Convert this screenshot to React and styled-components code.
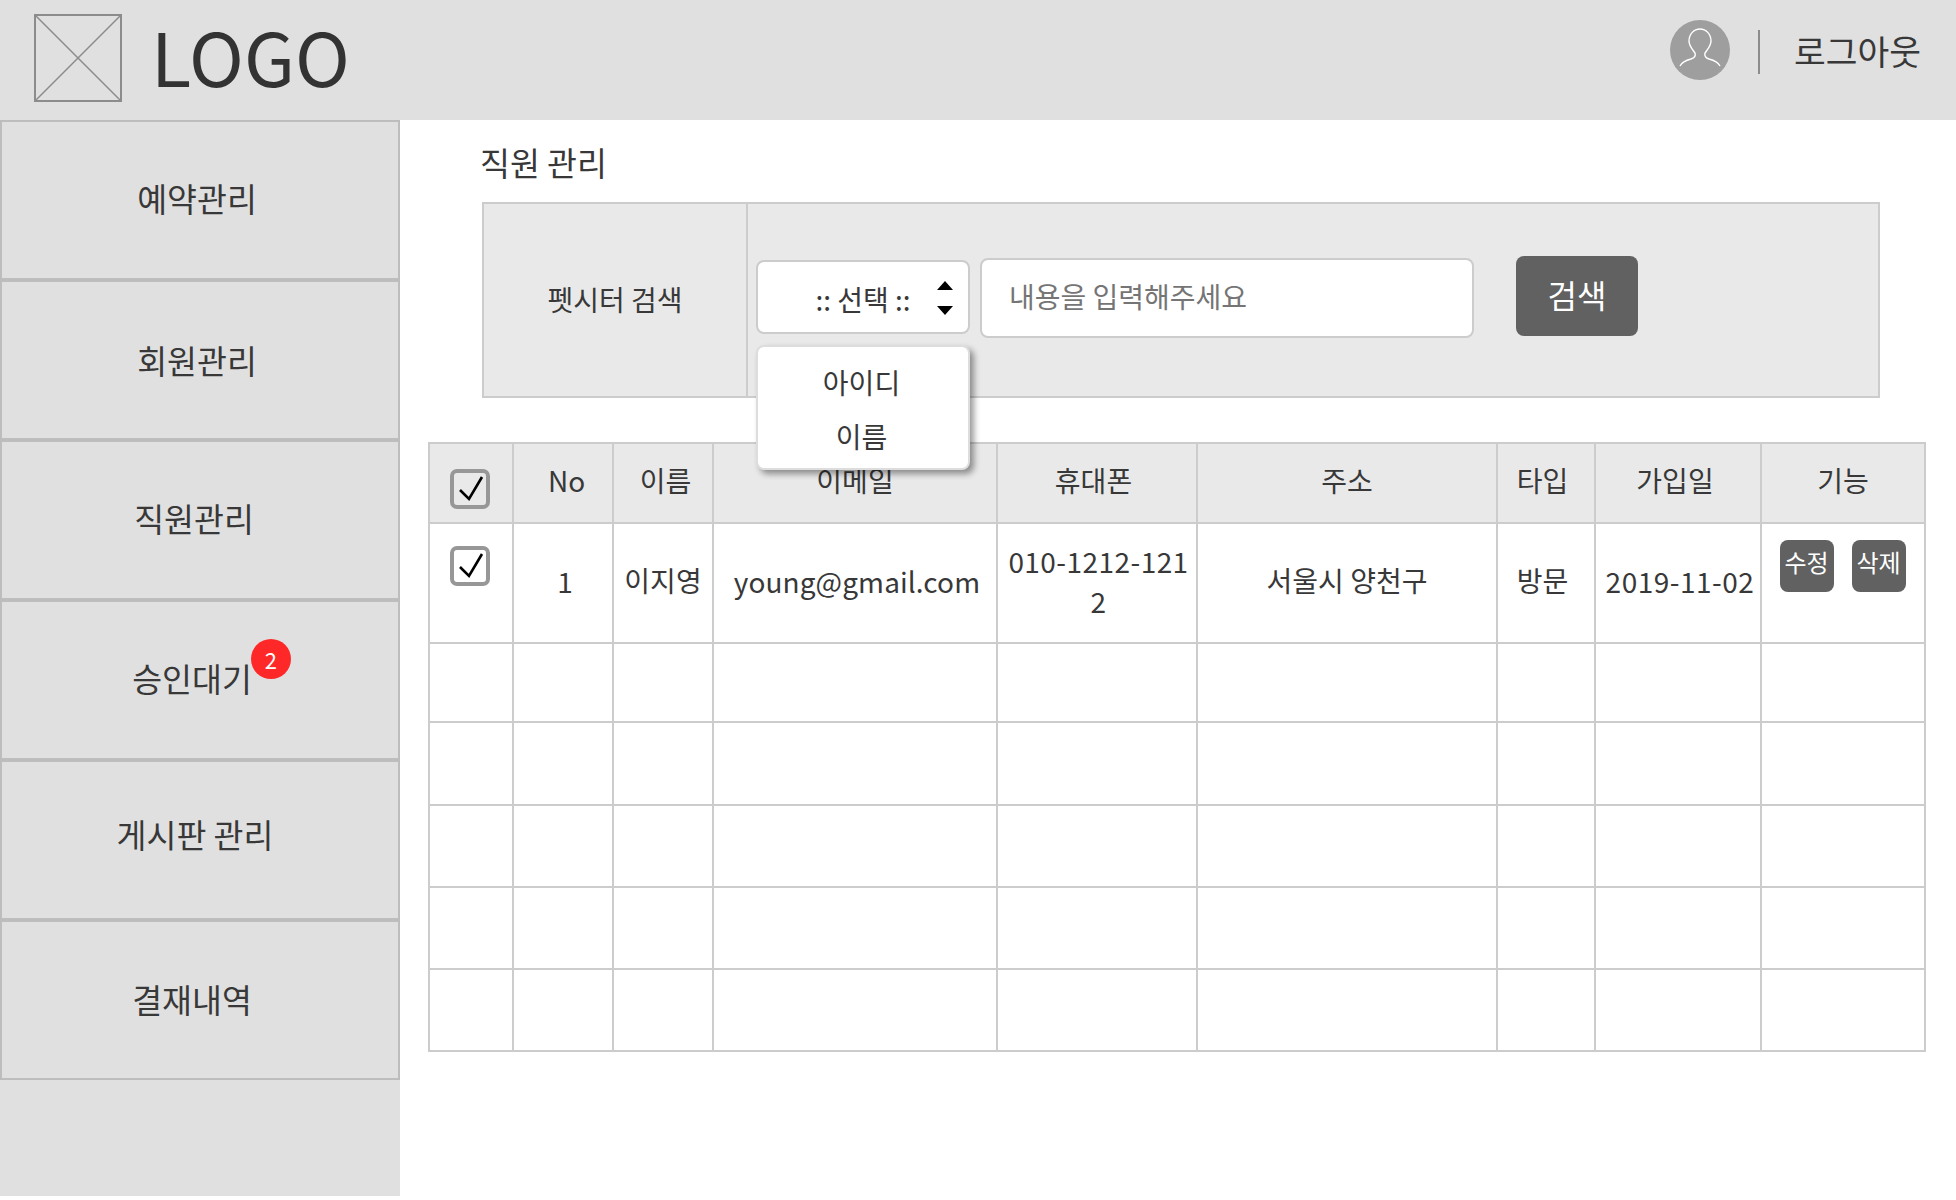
import React from "react";
import styled, { createGlobalStyle } from "styled-components";

const GlobalStyle = createGlobalStyle`
  body {
    margin: 0;
    background: #fff;
    color: #383838;
    font-family: "Noto Sans CJK KR", "Noto Sans", sans-serif;
  }
  * {
    box-sizing: border-box;
  }
`;

const Page = styled.div`
  width: 1956px;
`;

const Header = styled.header`
  height: 120px;
  background: #e0e0e0;
  display: flex;
  align-items: center;
  justify-content: space-between;
  padding: 0 35px 4px 34px;
`;

const LogoWrap = styled.div`
  display: flex;
  align-items: center;
  gap: 29px;
`;

const LogoText = styled.div`
  margin-bottom: 6px;
  font-size: 74px;
  line-height: 88px;
  color: #333;
`;

const UserArea = styled.div`
  display: flex;
  align-items: center;
  padding-bottom: 16px;
`;

const Avatar = styled.div`
  width: 60px;
  height: 60px;
  border-radius: 50%;
  background: #9e9e9e;
`;

const Divider = styled.div`
  width: 2px;
  height: 44px;
  margin: 4px 34px 0 28px;
  background: #8c8c8c;
`;

const Logout = styled.div`
  font-size: 34.5px;
  line-height: 44px;
`;

const Body = styled.div`
  display: flex;
  align-items: flex-start;
`;

const Sidebar = styled.nav`
  width: 400px;
  height: 1076px;
  flex-shrink: 0;
  background: #e0e0e0;
`;

const NavItem = styled.div`
  height: 160px;
  border: 2px solid #bdbdbd;
  display: flex;
  align-items: center;
  justify-content: center;
  padding-right: ${(p) => p.$shift || 0}px;
  padding-bottom: ${(p) => p.$lift || 0}px;
  font-size: 32.5px;
  line-height: 44px;
`;

const NavLabel = styled.span`
  position: relative;
`;

const Badge = styled.span`
  position: absolute;
  top: -17px;
  right: -39px;
  width: 40px;
  height: 40px;
  border-radius: 50%;
  background: #ff2828;
  color: #fff;
  font-size: 22px;
  line-height: 40px;
  text-align: center;
`;

const Main = styled.main`
  flex: 1;
  min-width: 0;
  padding: 22px 30px 0 28px;
`;

const Title = styled.h1`
  margin: 0 0 20px 52px;
  font-size: 32.5px;
  font-weight: 400;
  line-height: 40px;
`;

const SearchPanel = styled.section`
  display: flex;
  width: 1398px;
  height: 196px;
  margin: 0 0 44px 54px;
  border: 2px solid #ccc;
  background: #e9e9e9;
`;

const SearchLabel = styled.div`
  width: 264px;
  flex-shrink: 0;
  padding-bottom: 2px;
  border-right: 2px solid #ccc;
  display: flex;
  align-items: center;
  justify-content: center;
  font-size: 28px;
`;

const SearchFields = styled.div`
  flex: 1;
  display: flex;
  align-items: center;
  padding: 0 0 6px 8px;
`;

const SelectWrap = styled.div`
  position: relative;
  width: 214px;
  height: 74px;
  margin-right: 10px;
  padding-top: 12px;
  border: 2px solid #ccc;
  border-radius: 8px;
  background: #fff;
  font-size: 28px;
  line-height: 50px;
  text-align: center;
`;

const SelectArrows = styled.svg`
  position: absolute;
  top: 19px;
  right: 15px;
`;

const DropMenu = styled.ul`
  position: absolute;
  top: 83px;
  left: -2px;
  z-index: 5;
  width: 214px;
  height: 125px;
  margin: 0;
  padding: 8px 3px 0 0;
  list-style: none;
  border: 2px solid #ddd;
  border-radius: 8px;
  background: #fff;
  box-shadow: 4px 4px 6px rgba(0, 0, 0, 0.4);
`;

const DropItem = styled.li`
  height: 54px;
  line-height: 54px;
  text-align: center;
`;

const SearchInput = styled.input`
  width: 494px;
  height: 80px;
  margin: 2px 42px 0 0;
  padding: 0 0 4px 27px;
  border: 2px solid #ccc;
  border-radius: 8px;
  background: #fff;
  outline: none;
  font-family: inherit;
  font-size: 28px;
  &::placeholder {
    color: #757575;
    opacity: 1;
  }
`;

const SearchButton = styled.button`
  width: 122px;
  height: 80px;
  margin-bottom: 2px;
  border: none;
  border-radius: 8px;
  background: #616161;
  color: #fff;
  font-family: inherit;
  font-size: 32px;
  padding: 0 0 4px;
`;

const Table = styled.table`
  width: 1496px;
  table-layout: fixed;
  border-collapse: collapse;
  font-size: 28px;
`;

const Row = styled.tr`
  height: ${(p) => p.$height}px;
`;

const Th = styled.th`
  border: 2px solid #ccc;
  background: #e9e9e9;
  font-weight: 400;
  padding: 0 ${(p) => Math.max(-(p.$offset || 0), 0)}px 6px ${(p) => Math.max(p.$offset || 0, 0)}px;
`;

const CheckHead = styled(Th)`
  padding: 12px 2px 0 0;
`;

const Td = styled.td`
  border: 2px solid #ccc;
  padding: 0 ${(p) => Math.max(-(p.$offset || 0), 0)}px ${(p) => p.$bottom ?? 4}px ${(p) => Math.max(p.$offset || 0, 0)}px;
  text-align: center;
  line-height: 40px;
  letter-spacing: ${(p) => p.$spacing || 0}px;
`;

const PhoneCell = styled(Td)`
  padding: 0 5px 4px 8px;
  word-break: break-all;
`;

const CheckCell = styled(Td)`
  vertical-align: top;
  padding: 22px 2px 0 0;
`;

const ActionCell = styled(Td)`
  vertical-align: top;
  padding: 16px 1px 0 0;
`;

const Actions = styled.div`
  display: flex;
  justify-content: center;
  gap: 18px;
`;

const ActionButton = styled.button`
  width: 54px;
  height: 52px;
  padding: 0 0 8px;
  border: none;
  border-radius: 8px;
  background: #616161;
  color: #fff;
  font-family: inherit;
  font-size: 24px;
  line-height: 36px;
`;

const CheckBox = styled.span`
  display: inline-flex;
  width: 40px;
  height: 40px;
  border: 4px solid #979797;
  border-radius: 7px;
  background: transparent;
  vertical-align: top;
`;

const menu = [
  { label: "예약관리", shift: 6, lift: 5 },
  { label: "회원관리", shift: 6, lift: 0 },
  { label: "직원관리", shift: 12, lift: 5 },
  { label: "승인대기", shift: 16, lift: 5, badge: 2 },
  { label: "게시판 관리", shift: 10, lift: 12 },
  { label: "결재내역", shift: 16, lift: 3 },
];

const columns = [
  { name: "", width: 84 },
  { name: "No", width: 100, offset: 7 },
  { name: "이름", width: 100, offset: 5 },
  { name: "이메일", width: 284 },
  { name: "휴대폰", width: 200, offset: -7 },
  { name: "주소", width: 300 },
  { name: "타입", width: 98, offset: -7 },
  { name: "가입일", width: 166, offset: -6 },
  { name: "기능", width: 164 },
];

const emptyRows = [79, 83, 82, 82, 82];

function Check() {
  return (
    <CheckBox>
      <svg width="32" height="32" viewBox="0 0 32 32">
        <path d="M6 17l9 9L28 4" fill="none" stroke="#000" strokeWidth="2.6" />
      </svg>
    </CheckBox>
  );
}

function App() {
  return (
    <Page>
      <GlobalStyle />
      <Header>
        <LogoWrap>
          <svg width="88" height="88" viewBox="0 0 88 88">
            <rect x="1" y="1" width="86" height="86" fill="none" stroke="#8c8c8c" strokeWidth="2" />
            <path d="M1 1l86 86M87 1L1 87" stroke="#8c8c8c" strokeWidth="1.5" />
          </svg>
          <LogoText>LOGO</LogoText>
        </LogoWrap>
        <UserArea>
          <Avatar>
            <svg width="60" height="60" viewBox="0 0 60 60">
              <path
                d="M10 46c2-4 7-6 11-7 3-1 5-3 4-6-2-3-6-7-6-12 0-7 5-12 11-12s11 5 11 12c0 5-4 9-6 12-1 3 1 5 4 6 4 1 9 3 11 7"
                fill="none"
                stroke="#fff"
                strokeWidth="1.4"
              />
            </svg>
          </Avatar>
          <Divider />
          <Logout>로그아웃</Logout>
        </UserArea>
      </Header>
      <Body>
        <Sidebar>
          {menu.map((item) => (
            <NavItem key={item.label} $shift={item.shift} $lift={item.lift}>
              <NavLabel>
                {item.label}
                {item.badge && <Badge>{item.badge}</Badge>}
              </NavLabel>
            </NavItem>
          ))}
        </Sidebar>
        <Main>
          <Title>직원 관리</Title>
          <SearchPanel>
            <SearchLabel>펫시터 검색</SearchLabel>
            <SearchFields>
              <SelectWrap>
                :: 선택 ::
                <SelectArrows width="16" height="34" viewBox="0 0 16 34">
                  <path d="M8 0l8 9H0zM0 25h16l-8 9z" fill="#000" />
                </SelectArrows>
                <DropMenu>
                  <DropItem>아이디</DropItem>
                  <DropItem>이름</DropItem>
                </DropMenu>
              </SelectWrap>
              <SearchInput placeholder="내용을 입력해주세요" />
              <SearchButton>검색</SearchButton>
            </SearchFields>
          </SearchPanel>
          <Table>
            <colgroup>
              {columns.map((c) => (
                <col key={c.width + c.name} width={c.width} />
              ))}
            </colgroup>
            <thead>
              <Row $height={80}>
                <CheckHead>
                  <Check />
                </CheckHead>
                {columns.slice(1).map((c) => (
                  <Th key={c.name} $offset={c.offset}>
                    {c.name}
                  </Th>
                ))}
              </Row>
            </thead>
            <tbody>
              <Row $height={120}>
                <CheckCell>
                  <Check />
                </CheckCell>
                <Td $offset={4}>1</Td>
                <Td $bottom={6}>이지영</Td>
                <Td $spacing={0.1} $offset={4}>
                  young@gmail.com
                </Td>
                <PhoneCell $spacing={0.45}>010-1212-1212</PhoneCell>
                <Td $bottom={6}>서울시 양천구</Td>
                <Td $offset={-7} $bottom={6}>
                  방문
                </Td>
                <Td $spacing={0.5} $offset={4}>
                  2019-11-02
                </Td>
                <ActionCell>
                  <Actions>
                    <ActionButton>수정</ActionButton>
                    <ActionButton>삭제</ActionButton>
                  </Actions>
                </ActionCell>
              </Row>
              {emptyRows.map((height, r) => (
                <Row key={r} $height={height}>
                  {columns.map((c) => (
                    <Td key={c.width + c.name} />
                  ))}
                </Row>
              ))}
            </tbody>
          </Table>
        </Main>
      </Body>
    </Page>
  );
}

export default App;
